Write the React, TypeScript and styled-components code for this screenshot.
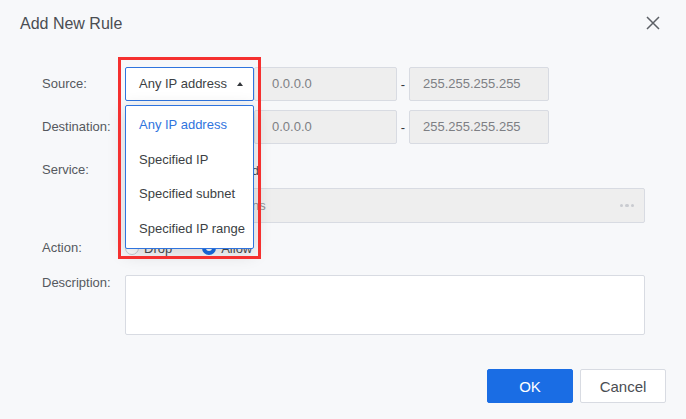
import { createGlobalStyle } from "styled-components";
import styled from "styled-components";

const GlobalStyle = createGlobalStyle`
  html, body {
    margin: 0;
    padding: 0;
    background: #f7f8fa;
    font-family: "Liberation Sans", Arial, sans-serif;
  }
`;

const Dialog = styled.div`
  position: relative;
  width: 686px;
  height: 419px;
  overflow: hidden;
  background: #f7f8fa;
  box-sizing: border-box;
  color: #4a4d52;
  font-size: 13px;
`;

const Header = styled.div`
  display: flex;
  align-items: center;
  justify-content: space-between;
  height: 24px;
  padding: 11px 25px 0 20px;
`;

const Title = styled.div`
  padding-top: 1px;
  font-size: 16px;
  color: #4a4d52;
`;

const CloseButton = styled.div`
  display: flex;
  width: 16px;
  height: 16px;
  color: #5d6066;
`;

const Form = styled.div`
  display: flex;
  flex-direction: column;
  padding: 32px 41px 0 42px;
`;

const Row = styled.div<{ $mt?: number; $center?: boolean }>`
  display: grid;
  grid-template-columns: 83px 1fr;
  align-items: ${(p) => (p.$center ? "center" : "start")};
  margin-top: ${(p) => p.$mt ?? 0}px;
`;

const Label = styled.div`
  line-height: 16px;
  font-size: 13px;
  color: #55585e;
`;

const Controls = styled.div`
  display: flex;
  align-items: center;
`;

const SelectBox = styled.div`
  display: flex;
  align-items: center;
  justify-content: space-between;
  box-sizing: border-box;
  width: 129px;
  height: 34px;
  padding: 0 10px 1px 13px;
  background: #fff;
  border: 1px solid #2f74de;
  border-radius: 2px;
  font-size: 13px;
  color: #3c3f44;
`;

const Caret = styled.span`
  width: 0;
  height: 0;
  border-left: 3.5px solid transparent;
  border-right: 3.5px solid transparent;
  border-bottom: 4px solid #33363b;
`;

const IpInput = styled.div<{ $w: number }>`
  display: flex;
  align-items: center;
  box-sizing: border-box;
  width: ${(p) => p.$w}px;
  height: 34px;
  padding: 0 0 1px 13px;
  background: #eeeeee;
  border: 1px solid #d8dbe2;
  border-radius: 2px;
  font-size: 13px;
  color: #7d7f84;
`;

const StartInput = styled(IpInput)`
  padding-left: 17px;
`;

const Dash = styled.span`
  width: 12px;
  text-align: center;
  font-size: 13px;
  color: #33363b;
`;

const RadioGroup = styled.div<{ $gap: number }>`
  display: flex;
  align-items: center;
  gap: ${(p) => p.$gap}px;
  height: 16px;
`;

const RadioLabel = styled.label`
  display: flex;
  align-items: center;
  gap: 5px;
  font-size: 13px;
  color: #4a4d52;
`;

const RadioDot = styled.span<{ $on?: boolean }>`
  box-sizing: border-box;
  width: 14px;
  height: 14px;
  border-radius: 50%;
  background: #fff;
  border: ${(p) => (p.$on ? "4px solid #1a6de4" : "1px solid #c9ccd3")};
`;

const WideInput = styled.div`
  display: flex;
  align-items: center;
  justify-content: space-between;
  box-sizing: border-box;
  width: 520px;
  height: 35px;
  padding: 0 10px 0 17px;
  background: #eeeeee;
  border: 1px solid #d8dbe2;
  border-radius: 2px;
  font-size: 13px;
  color: #8f9195;
`;

const Dots = styled.span`
  display: flex;
  gap: 2px;
`;

const Dot = styled.span`
  width: 3.5px;
  height: 3.5px;
  border-radius: 50%;
  background: #c9cbd0;
`;

const TextArea = styled.div`
  box-sizing: border-box;
  width: 520px;
  height: 60px;
  background: #fff;
  border: 1px solid #d8dbe2;
  border-radius: 2px;
`;

const Footer = styled.div`
  display: flex;
  justify-content: flex-end;
  gap: 7px;
  margin-top: 34px;
  padding-right: 20px;
`;

const Button = styled.div<{ $primary?: boolean }>`
  display: flex;
  align-items: center;
  justify-content: center;
  box-sizing: border-box;
  width: 86px;
  height: 34px;
  padding-top: 1px;
  border-radius: 2px;
  font-size: 15px;
  background: ${(p) => (p.$primary ? "#1a6de4" : "#fff")};
  border: 1px solid ${(p) => (p.$primary ? "#1a6de4" : "#d8dbe2")};
  color: ${(p) => (p.$primary ? "#fff" : "#4a4d52")};
`;

const Menu = styled.div`
  position: absolute;
  left: 125px;
  top: 105px;
  box-sizing: border-box;
  width: 129px;
  height: 144px;
  padding: 2px 0;
  background: #fff;
  border: 1px solid #2f74de;
  border-radius: 2px;
  box-shadow: 0 4px 18px rgba(0, 0, 0, 0.16);
`;

const MenuItem = styled.div<{ $active?: boolean }>`
  height: 34.5px;
  line-height: 34.5px;
  padding-left: 13px;
  font-size: 13px;
  white-space: nowrap;
  color: ${(p) => (p.$active ? "#2f74de" : "#3c3f44")};
`;

const Highlight = styled.div`
  position: absolute;
  left: 118px;
  top: 57px;
  box-sizing: border-box;
  width: 143px;
  height: 202px;
  border: 3px solid #f5302f;
  pointer-events: none;
`;

const menuItems = ["Any IP address", "Specified IP", "Specified subnet", "Specified IP range"];

export default function App() {
  return (
    <>
      <GlobalStyle />
      <Dialog>
        <Header>
          <Title>Add New Rule</Title>
          <CloseButton>
            <svg width="16" height="16" viewBox="0 0 16 16" fill="none" stroke="currentColor" strokeWidth="1.5">
              <path d="M2 2l12 12M14 2L2 14" />
            </svg>
          </CloseButton>
        </Header>

        <Form>
          <Row $center>
            <Label>Source:</Label>
            <Controls>
              <SelectBox>
                Any IP address
                <Caret />
              </SelectBox>
              <StartInput $w={143}>0.0.0.0</StartInput>
              <Dash>-</Dash>
              <IpInput $w={140}>255.255.255.255</IpInput>
            </Controls>
          </Row>

          <Row $center $mt={9}>
            <Label>Destination:</Label>
            <Controls>
              <SelectBox>
                Any IP address
                <Caret />
              </SelectBox>
              <StartInput $w={143}>0.0.0.0</StartInput>
              <Dash>-</Dash>
              <IpInput $w={140}>255.255.255.255</IpInput>
            </Controls>
          </Row>

          <Row $mt={18}>
            <Label>Service:</Label>
            <RadioGroup $gap={28}>
              <RadioLabel>
                <RadioDot />
                All
              </RadioLabel>
              <RadioLabel>
                <RadioDot $on />
                Specified
              </RadioLabel>
            </RadioGroup>
          </Row>

          <Row $mt={10}>
            <span />
            <WideInput>
              <span>Please select options</span>
              <Dots>
                <Dot />
                <Dot />
                <Dot />
              </Dots>
            </WideInput>
          </Row>

          <Row $mt={17}>
            <Label>Action:</Label>
            <RadioGroup $gap={30}>
              <RadioLabel>
                <RadioDot />
                Drop
              </RadioLabel>
              <RadioLabel>
                <RadioDot $on />
                Allow
              </RadioLabel>
            </RadioGroup>
          </Row>

          <Row $mt={19}>
            <Label>Description:</Label>
            <TextArea />
          </Row>
        </Form>

        <Footer>
          <Button $primary>OK</Button>
          <Button>Cancel</Button>
        </Footer>

        <Menu>
          {menuItems.map((item, i) => (
            <MenuItem key={item} $active={i === 0}>
              {item}
            </MenuItem>
          ))}
        </Menu>
        <Highlight />
      </Dialog>
    </>
  );
}
